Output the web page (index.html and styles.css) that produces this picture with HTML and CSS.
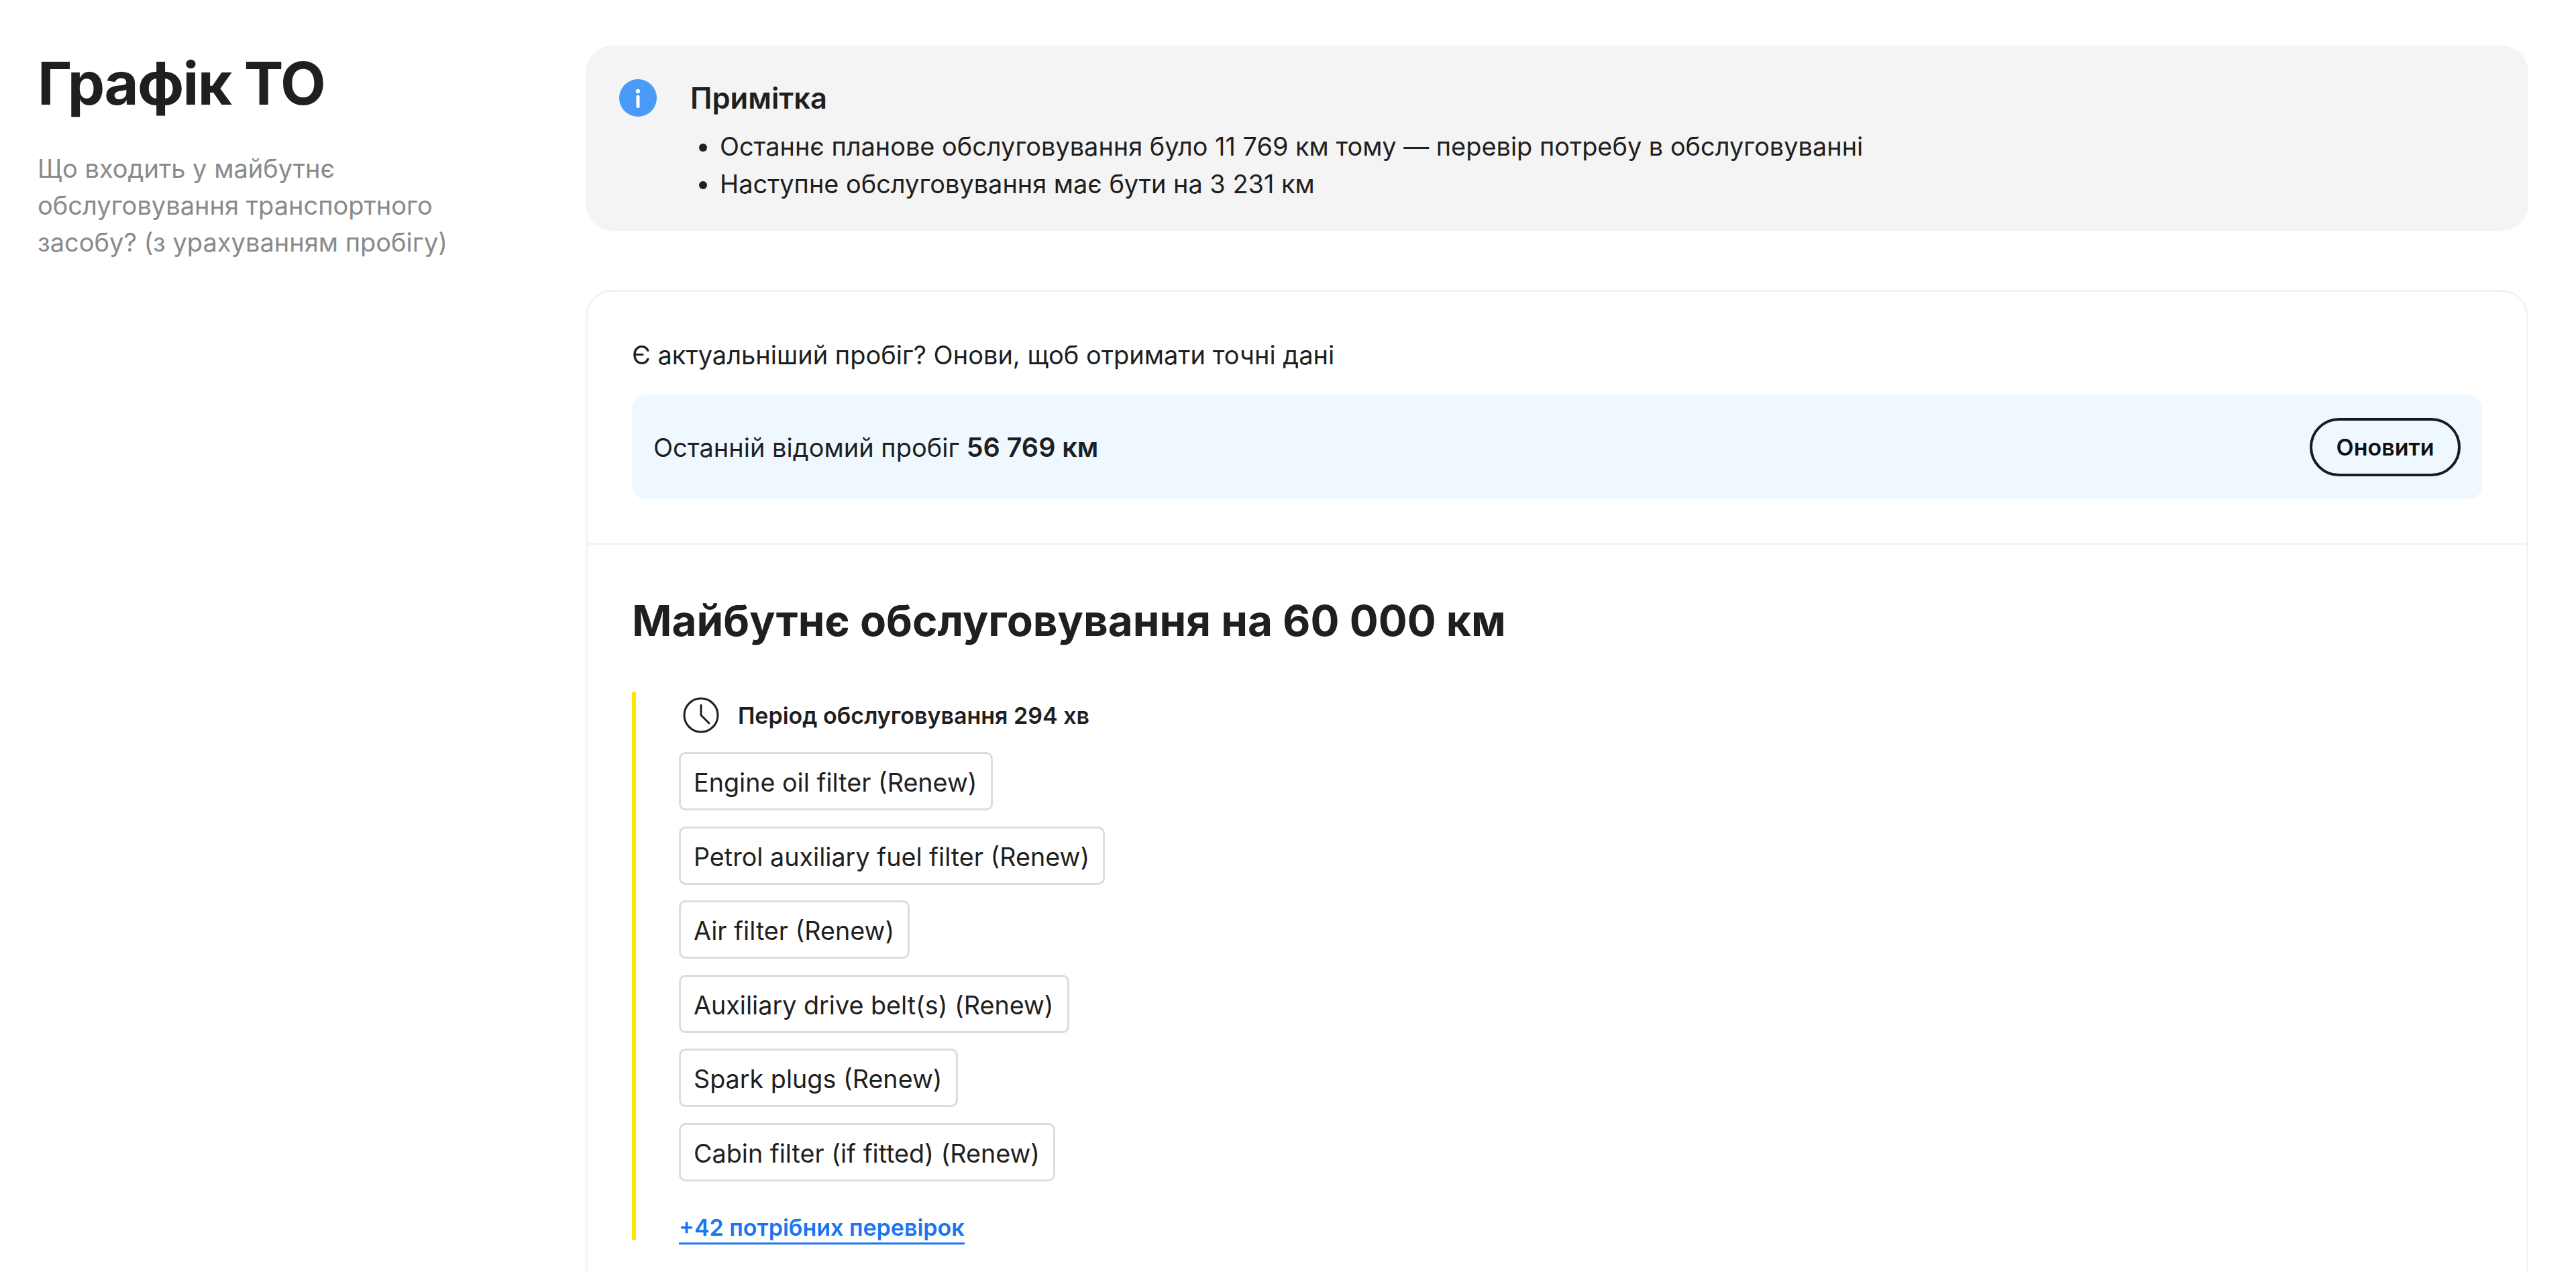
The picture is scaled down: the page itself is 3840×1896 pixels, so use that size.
FILE: index.html
```html
<!DOCTYPE html>
<html lang="uk">
<head>
<meta charset="utf-8">
<title>Графік ТО</title>
<link rel="stylesheet" href="styles.css">
</head>
<body>
<div class="page">
  <aside class="side">
    <h1 class="title">Графік ТО</h1>
    <p class="lead">Що входить у майбутнє обслуговування транспортного засобу? (з урахуванням пробігу)</p>
  </aside>
  <main class="main">
    <section class="note">
      <svg class="note-icon" viewBox="0 0 56 56"><circle cx="28" cy="28" r="28" fill="#4a9bf8"/><circle cx="28" cy="18" r="3.2" fill="#fff"/><rect x="25.5" y="24" width="5" height="19" rx="2" fill="#fff"/></svg>
      <div class="note-body">
        <h2 class="note-title">Примітка</h2>
        <ul class="note-list">
          <li>Останнє планове обслуговування було 11 769 км тому — перевір потребу в обслуговуванні</li>
          <li>Наступне обслуговування має бути на 3 231 км</li>
        </ul>
      </div>
    </section>
    <section class="card">
      <div class="update">
        <p class="update-text">Є актуальніший пробіг? Онови, щоб отримати точні дані</p>
        <div class="mileage">
          <span>Останній відомий пробіг <strong class="strong">56 769 км</strong></span>
          <button class="btn">Оновити</button>
        </div>
      </div>
      <div class="future">
        <h2 class="future-title">Майбутнє обслуговування на 60 000 км</h2>
        <div class="service">
          <div class="period">
            <svg class="clock" viewBox="0 0 54 54" fill="none" stroke="#1f1f1f" stroke-width="3" stroke-linecap="round" stroke-linejoin="round"><circle cx="27" cy="27" r="25"/><path d="M27 12v15l12 12"/></svg>
            <span>Період обслуговування 294 хв</span>
          </div>
          <div class="chips">
            <div class="chip">Engine oil filter (Renew)</div>
            <div class="chip">Petrol auxiliary fuel filter (Renew)</div>
            <div class="chip">Air filter (Renew)</div>
            <div class="chip">Auxiliary drive belt(s) (Renew)</div>
            <div class="chip">Spark plugs (Renew)</div>
            <div class="chip">Cabin filter (if fitted) (Renew)</div>
          </div>
          <a class="more" href="#">+42 потрібних перевірок</a>
        </div>
      </div>
    </section>
  </main>
</div>
</body>
</html>
```
FILE: styles.css
```css
* { box-sizing: border-box; }
html, body { margin: 0; height: 100%; overflow: hidden; background: #fff; }
body { font-family: Inter, "Noto Sans", sans-serif; color: #1f1f1f; }
h1, h2, p, ul { margin: 0; padding: 0; }
.page { display: flex; padding: 68px 71px 0 56px; align-items: flex-start; }
.side { width: 817px; flex: none; }
.title { font-size: 88px; line-height: 112px; font-weight: 700; letter-spacing: -1.6px; }
.lead { margin-top: 44px; width: 640px; font-size: 38px; line-height: 55px; color: #8a8a8a; }
.main { flex: 1; min-width: 0; display: flex; flex-direction: column; gap: 88px; }
.note { display: flex; height: 276px; background: #f4f4f4; border-radius: 40px; padding: 50px 50px 0; gap: 50px; }
.note-icon { width: 56px; height: 56px; flex: none; }
.note-title { font-size: 43.5px; line-height: 56px; font-weight: 600; }
.note-list { margin-top: 16px; padding-left: 44px; font-size: 37.9px; line-height: 56px; }
.card { border: 3px solid #f3f3f3; border-bottom: 0; border-radius: 40px 40px 0 0; padding-bottom: 120px; }
.update { padding: 66px 66px 65px; border-bottom: 3px solid #f3f3f3; }
.update-text { font-size: 38px; line-height: 56px; }
.mileage { margin-top: 32px; height: 155px; background: #f0f8ff; border-radius: 20px; display: flex; align-items: center; justify-content: space-between; padding: 0 32px; font-size: 38px; }
.strong { font-size: 39.5px; font-weight: 600; }
.btn { width: 225px; height: 87px; border: 4px solid #1a1a1a; border-radius: 44px; background: transparent; font: 600 34px Inter, sans-serif; color: #111; padding: 0; }
.future { padding: 71px 66px 0; }
.future-title { font-size: 63.8px; line-height: 84px; font-weight: 700; }
.service { margin-top: 64px; border-left: 6px solid #ffe600; padding-left: 64px; height: 817px; }
.period { display: flex; align-items: center; gap: 28px; height: 70px; padding-left: 6px; font-size: 34px; font-weight: 600; }
.clock { width: 54px; height: 54px; flex: none; }
.chips { margin-top: 20px; display: flex; flex-direction: column; align-items: flex-start; gap: 23.5px; }
.chip { height: 87px; display: flex; align-items: center; padding: 3px 20px 0 19px; border: 3px solid #dcdcdc; border-radius: 10px; font-size: 37.7px; }
.more { display: inline-block; margin-top: 47px; font-size: 34px; line-height: 44px; font-weight: 600; color: #1a75f0; text-decoration: none; border-bottom: 3px solid #1a75f0; }
```
